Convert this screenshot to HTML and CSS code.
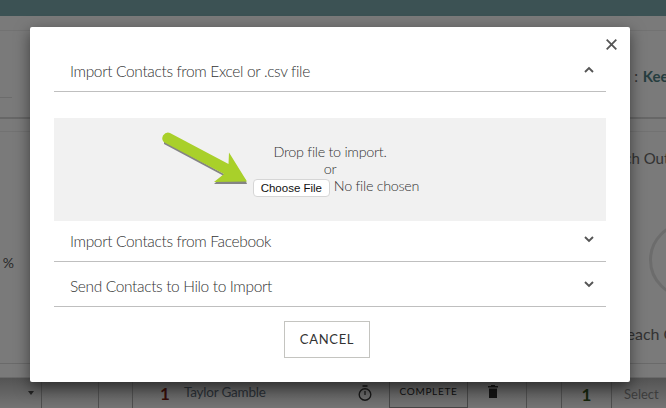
FILE: index.html
```html
<!DOCTYPE html>
<html>

<head>
    <title>Import Contacts</title>
    <link rel="stylesheet" href="styles.css">
</head>

<body>
    <div class="page">
        <div class="top-bar"></div>
        <div class="sub-bar"></div>
        <div class="head-row">
            <div class="short-line"></div>
            <span class="crumb">n : <b>Keep</b></span>
        </div>
        <div class="stats-row">
            <div class="stat-left">0 %</div>
            <div class="stat-right">
                <div class="reach-out">Reach Out</div>
                <div class="ring"></div>
                <div class="reach-c">Reach Contacts</div>
            </div>
        </div>
        <div class="task-row">
            <div class="cell cell-drop"><span class="caret"></span></div>
            <div class="cell cell-gap"></div>
            <div class="cell cell-gap3"></div>
            <div class="cell cell-name"><span class="num-red">1</span><span class="name">Taylor Gamble</span></div>
            <div class="cell cell-timer">
                <svg width="14" height="17" viewBox="0 0 14 17">
                    <path d="M4.500 1h5" fill="none" stroke="#2e2e2e" stroke-width="1.6" />
                    <circle cx="7" cy="9.500" r="5.800" fill="none" stroke="#2e2e2e" stroke-width="1.4" />
                    <path d="M7 6v4" fill="none" stroke="#2e2e2e" stroke-width="1.3" />
                </svg>
            </div>
            <div class="cell cell-complete"><span class="complete">COMPLETE</span></div>
            <div class="cell cell-trash">
                <svg width="10" height="13" viewBox="0 0 10 13">
                    <path d="M3 0h4v1h3v1.500H0V1h3zM1 3.500h8V13H1z" fill="#262626" />
                </svg>
            </div>
            <div class="cell cell-gap2"></div>
            <div class="cell cell-one"><span class="num-green">1</span></div>
            <div class="cell cell-select">Select</div>
        </div>
    </div>

    <div class="backdrop"></div>

    <div class="modal">
        <button class="close-btn">
            <svg width="11" height="11" viewBox="0 0 11 11">
                <path d="M.7.700l9.600 9.600M10.300.700L.7 10.300" fill="none" stroke="#555" stroke-width="1.8" />
            </svg>
        </button>

        <div class="section-head first-head">
            <span>Import Contacts from Excel or .csv file</span>
            <svg class="chev" width="10" height="7" viewBox="0 0 10 7">
                <path d="M1 6l4-4 4 4" fill="none" stroke="#555" stroke-width="1.9" />
            </svg>
        </div>

        <div class="drop-zone">
            <svg class="arrow" width="100" height="64" viewBox="0 0 100 64">
                <path class="arrow-shadow" d="M12 15L71 46.500 62 55 95 55 93 50 72 45 12 12Z" />
                <path class="arrow-fill" d="M18 4L76.500 35 77 23.500 95 52.500 62 53 72 45 12.500 13.500Q9 11 11 6.500Q14 2.500 18 4Z" />
            </svg>
            <div class="drop-text">Drop file to import.</div>
            <div class="drop-or">or</div>
            <div class="file-line">
                <button class="file-btn">Choose File</button>
                <span class="no-file">No file chosen</span>
            </div>
        </div>

        <div class="section-head second-head">
            <span>Import Contacts from Facebook</span>
            <svg class="chev" width="10" height="7" viewBox="0 0 10 7">
                <path d="M1 1l4 4 4-4" fill="none" stroke="#555" stroke-width="1.9" />
            </svg>
        </div>
        <div class="section-head third-head">
            <span>Send Contacts to Hilo to Import</span>
            <svg class="chev" width="10" height="7" viewBox="0 0 10 7">
                <path d="M1 1l4 4 4-4" fill="none" stroke="#555" stroke-width="1.9" />
            </svg>
        </div>

        <div class="modal-foot">
            <button class="cancel-btn">CANCEL</button>
        </div>
    </div>
</body>

</html>
```

FILE: styles.css
```css
html,
body {
    margin: 0;
    padding: 0;
}

body {
    width: 666px;
    height: 408px;
    overflow: hidden;
    position: relative;
    font-family: "Lato", "Liberation Sans", sans-serif;
    color: #555;
}

/* page behind the dialog */
.page {
    height: 408px;
    display: flex;
    flex-direction: column;
    background-color: #f4f4f4;
}

.top-bar {
    height: 16px;
    background-color: #78a4a8;
}

.sub-bar {
    height: 14px;
    border-bottom: 1px solid #e4e4e4;
}

.head-row {
    height: 88px;
    border-bottom: 2px solid #cfcfcf;
    display: flex;
    justify-content: space-between;
    box-sizing: border-box;
    margin-bottom: 12px;
    overflow: hidden;
}

.short-line {
    width: 12px;
    height: 66px;
    border-bottom: 1px solid #d8d8d8;
}

.crumb {
    width: 44px;
    margin-top: 36px;
    font-size: 15px;
    white-space: nowrap;
    color: #666;
}

.crumb b {
    color: #4d7c80;
    margin-left: 1px;
}

.stats-row {
    flex: 1;
    border-top: 1px solid #e4e4e4;
    border-bottom: 1px solid #d4d4d4;
    display: flex;
    justify-content: space-between;
    overflow: hidden;
}

.stat-left {
    margin-top: 122px;
    margin-left: -9px;
    font-size: 14px;
    color: #555;
}

.stat-right {
    width: 36px;
    overflow: hidden;
    font-size: 15px;
    white-space: nowrap;
    color: #666;
}

.reach-out {
    margin-top: 17px;
    margin-left: -30px;
}

.ring {
    width: 70px;
    height: 70px;
    margin: 55px 0 0 19px;
    border-radius: 50%;
    border: 3px solid #d8d8d8;
}

.reach-c {
    margin-top: 26px;
    margin-left: -13px;
    font-size: 16px;
}

.task-row {
    height: 30px;
    margin-top: 13px;
    display: flex;
    border-top: 1px solid #d4d4d4;
    background: linear-gradient(#a8a8a8, #e8e8e8);
    font-size: 13px;
}

.cell {
    height: 100%;
    box-sizing: border-box;
    border-right: 1px solid #9a9a9a;
    display: flex;
    align-items: center;
    flex-shrink: 0;
}

.cell-drop {
    width: 42px;
    justify-content: flex-end;
    padding-right: 7px;
}

.caret {
    width: 0;
    height: 0;
    border-left: 3px solid transparent;
    border-right: 3px solid transparent;
    border-top: 4px solid #444;
}

.cell-gap {
    width: 57px;
}

.cell-gap3 {
    width: 34px;
}

.cell-name {
    width: 212px;
    padding-left: 27px;
    border-right: 0;
}

.num-red {
    color: #6b1a12;
    font-weight: 700;
    font-size: 17px;
    width: 24px;
}

.name {
    color: #4f5a66;
    font-size: 13.5px;
    letter-spacing: -0.2px;
    margin-bottom: 2px;
}

.cell-timer {
    width: 45px;
    border-right: 1px solid #8a8a8a;
    padding-left: 13px;
}

.cell-complete {
    width: 78px;
    border-right: 1px solid #8a8a8a;
    border-bottom: 1px solid #8a8a8a;
    justify-content: center;
}

.complete {
    font-size: 10px;
    letter-spacing: 0.7px;
    margin-bottom: 3px;
    color: #222;
}

.cell-trash {
    width: 59px;
    padding-left: 20px;
    align-items: flex-start;
    padding-top: 7px;
}

.cell-gap2 {
    width: 35px;
}

.cell-one {
    width: 50px;
    justify-content: center;
}

.num-green {
    color: #2d4a16;
    font-weight: 700;
    font-size: 17px;
    margin-top: 2px;
}

.cell-select {
    border-right: 0;
    padding-left: 12px;
    padding-top: 1px;
    color: #7a7a7a;
}

.backdrop {
    position: absolute;
    top: 0;
    left: 0;
    right: 0;
    bottom: 0;
    background-color: rgba(0, 0, 0, 0.5);
}

/* dialog */
.modal {
    position: absolute;
    top: 27px;
    left: 30px;
    width: 600px;
    height: 355px;
    box-sizing: border-box;
    padding: 22px 24px 0;
    background-color: #fff;
    border-radius: 2px;
    box-shadow: 0 5px 15px rgba(0, 0, 0, 0.5);
}

.close-btn {
    position: absolute;
    top: 12px;
    right: 13px;
    width: 11px;
    height: 11px;
    padding: 0;
    border: 0;
    background: none;
    display: flex;
}

.section-head {
    height: 45px;
    box-sizing: border-box;
    border-bottom: 1px solid #bfbfbf;
    display: flex;
    justify-content: space-between;
    align-items: center;
    padding: 2px 12px 0 16px;
    font-size: 15.5px;
    font-weight: 300;
    letter-spacing: -0.36px;
    color: #333;
}

.first-head {
    height: 43px;
}

.second-head {
    height: 41px;
    padding-top: 0;
}

.third-head {
    padding-top: 4px;
}

.section-head .chev {
    margin-bottom: 3px;
}

.drop-zone {
    position: relative;
    margin-top: 26px;
    height: 103px;
    box-sizing: border-box;
    padding-top: 25px;
    background-color: #f1f1f1;
    text-align: center;
    font-size: 14.4px;
    font-weight: 300;
    letter-spacing: -0.3px;
    line-height: 17px;
    color: #333;
}

.arrow {
    position: absolute;
    top: 11px;
    left: 98px;
}

.arrow-shadow {
    fill: #555;
    opacity: 0.7;
}

.arrow-fill {
    fill: #a9d02a;
}

.file-line {
    display: flex;
    justify-content: center;
    align-items: center;
    gap: 4px;
    padding-left: 12px;
}

.no-file {
    margin-bottom: 4px;
}

.file-btn {
    width: 77px;
    height: 18px;
    padding: 1px 0 0;
    background-color: #fff;
    border: 1px solid #d6d6d6;
    border-radius: 4px;
    font-family: "Liberation Sans", sans-serif;
    font-size: 11.5px;
    color: #111;
}

.modal-foot {
    display: flex;
    justify-content: center;
    padding: 14px 6px 0 0;
}

.cancel-btn {
    width: 86px;
    height: 37px;
    padding: 0 0 2px;
    background-color: #fff;
    border: 1px solid #c4c4c0;
    font-family: "Lato", sans-serif;
    font-size: 13px;
    letter-spacing: 0.7px;
    color: #333;
}
```
